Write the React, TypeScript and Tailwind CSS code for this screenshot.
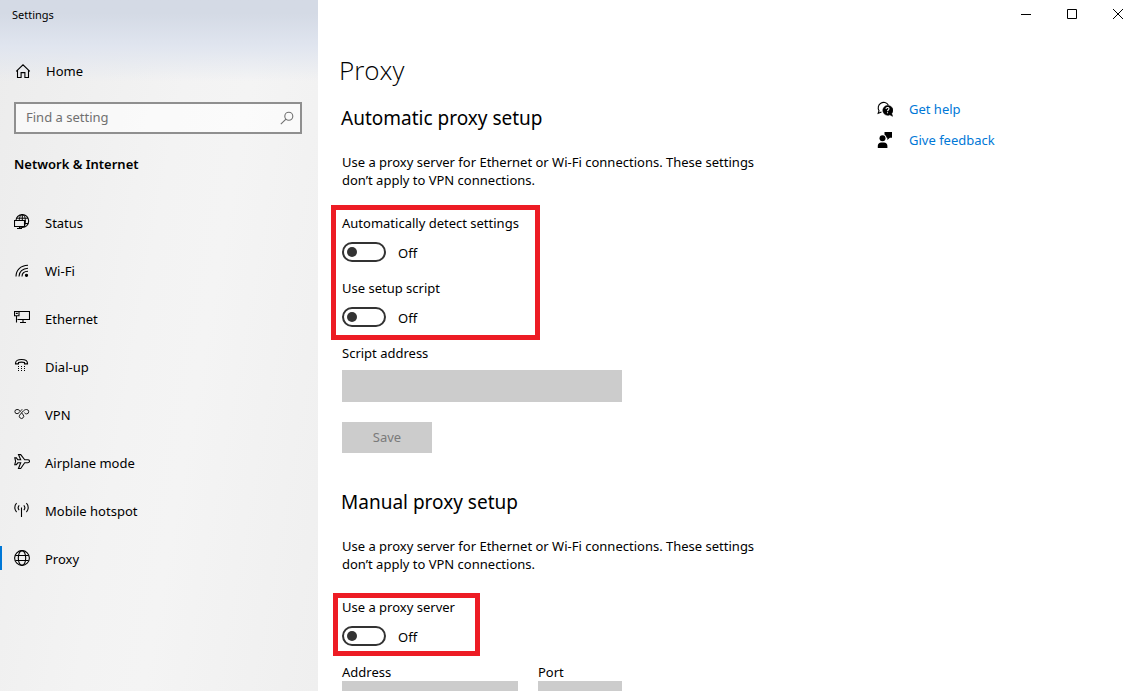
import { useState } from "react";
import type { ReactNode } from "react";

function Icon({ children }: { children: ReactNode }) {
  return (
    <svg viewBox="0 0 16 16" className="size-4 shrink-0" fill="none" stroke="currentColor" strokeWidth="1.1" aria-hidden="true">
      {children}
    </svg>
  );
}

const HomeIcon = () => (
  <Icon>
    <path d="M1.2 8.3 8 1.8l6.8 6.5M2.5 7.3v7.2h3.6V9.6h3.8v4.9h3.6V7.3" />
  </Icon>
);

const StatusIcon = () => (
  <Icon>
    <circle cx="8.3" cy="7" r="6.4" />
    <path d="M2.6 4.2h11.400M9 9.500h5.200M8.300.6v6M5.300 6.600c0-3.500 1.300-6 3-6s3.100 2.800 3.100 6.400c0 2-.3 4-1 5.300" strokeWidth="1" />
    <path d="M.5 6.500h10v6h-10z" fill="#ececec" />
    <path d="M5.500 12.500v2M3 14.500h5" />
  </Icon>
);

const WifiIcon = () => (
  <Icon>
    <path d="M2 14.500C2 8 6.500 3.500 14 3.200M5 14.500C5 9.800 8.600 6.400 14 6.200M8 14.500c0-3 2.400-5.200 6-5.300" />
    <circle cx="12.500" cy="13.300" r="1.100" fill="currentColor" />
  </Icon>
);

const EthernetIcon = () => (
  <Icon>
    <path d="M5 1.500h10.500v8H3.500M.5 1.500H5v4.200H.5zM2.500 5.700v6.800M1.800 3.400h2M9 9.500v3M6 12.500h6" />
  </Icon>
);

const DialupIcon = () => (
  <Icon>
    <path d="M1.500 5.200C1.500 2.600 4 1.500 7.500 1.500s6 1.100 6 3.700v.7h-3V4.500c-1.800-.5-4.200-.5-6 0v1.400h-3z" />
    <path d="M4 8.500h7M4 10.500h7M4 12.500h7" strokeWidth="1" strokeDasharray="1 2" />
  </Icon>
);

const VpnIcon = () => (
  <Icon>
    <g strokeWidth="0.9">
      <path d="M5.600 9.200 8.300 6C9.800 4.300 11 3.500 12.500 3.500a2.200 2.200 0 1 1 0 4.400c-.9 0-1.600-.5-2.100-1.200" />
      <path d="M6.200 5.200C5.600 4.200 4.600 3.500 3 3.500a2.100 2.100 0 1 0 0 4.200c1.800 0 2.600-1.800 3.400-2.700.6-.7 1.200-1.200 2-1.300" />
      <path d="M7.600 6.800 9.300 9a2.200 2.200 0 1 1-3.700.2" />
    </g>
  </Icon>
);

const AirplaneIcon = () => (
  <Icon>
    <path d="M6.700 5.800 4.500.6h2.200l4 5.200h3.100c1 0 1.700.7 1.700 1.500s-.7 1.500-1.700 1.500h-3.100l-4 5.700H4.500l2.200-5.700H3.800L2.400 10.700H.8l.8-3.400L.8 3.900h1.600l1.400 1.900z" />
  </Icon>
);

const HotspotIcon = () => (
  <Icon>
    <path d="M7.500 5.500v9.500M5.200 3.400a3.600 3.600 0 0 0 0 4.800M9.800 3.400a3.600 3.600 0 0 1 0 4.800M2.600 1.200a6.300 6.300 0 0 0 0 8.800M12.400 1.200a6.300 6.300 0 0 1 0 8.800" />
  </Icon>
);

const GlobeIcon = () => (
  <Icon>
    <circle cx="8" cy="8" r="7.400" />
    <ellipse cx="8" cy="8" rx="3.700" ry="7.400" />
    <path d="M1.400 5.500h13.200M1.400 10.500h13.200" />
  </Icon>
);

const SearchIcon = () => (
  <Icon>
    <circle cx="9.800" cy="6.200" r="4" />
    <path d="M7 9.200 1.800 14.200" />
  </Icon>
);

const HelpIcon = () => (
  <Icon>
    <path d="M4.500 10.900 1.200 12.200 2 9.700A5.100 5.100 0 1 1 11.300 4" />
    <path d="M10.500 4.500a4.900 4.900 0 1 0 2.400 9.300l2.600 1.500-.8-2.700a4.900 4.900 0 0 0-4.200-8.100z" fill="currentColor" strokeWidth="0.600" />
    <path d="M9 8c0-2 3-2 3-.2 0 1.200-1.500 1.200-1.500 2.500M10.500 11.200v1.100" stroke="#fff" />
  </Icon>
);

const FeedbackIcon = () => (
  <Icon>
    <g fill="currentColor" stroke="none">
      <circle cx="5.500" cy="6.300" r="3" />
      <path d="M.8 16v-2.200c0-2.100 1.500-3.400 3.400-3.400h2.800c2 0 3.400 1.300 3.400 3.400V16zM7.500 0H15v5.700h-2.100L10.300 8V5.700H9.600A4.400 4.400 0 0 0 7.500 2.400z" />
    </g>
  </Icon>
);

const navItems = [
  { label: "Status", icon: StatusIcon },
  { label: "Wi-Fi", icon: WifiIcon },
  { label: "Ethernet", icon: EthernetIcon },
  { label: "Dial-up", icon: DialupIcon },
  { label: "VPN", icon: VpnIcon },
  { label: "Airplane mode", icon: AirplaneIcon },
  { label: "Mobile hotspot", icon: HotspotIcon },
  { label: "Proxy", icon: GlobeIcon },
];

function Sidebar() {
  return (
    <aside className="flex w-[318px] shrink-0 flex-col bg-[linear-gradient(100deg,#ececec_0%,#f3f3f3_45%,#f4f4f4_60%,#efefef_100%)]">
      <div className="flex flex-col bg-linear-to-b from-[#d4dae5] from-15% via-[#e0e5ef] via-50% to-transparent to-90%">
        <div className="flex h-[30px] items-center pl-3 text-[11px]">Settings</div>
        <div className="mt-[21px] flex h-10 items-center">
          <a href="#home" className="flex items-center gap-[15px] pl-[15px]">
            <HomeIcon />
            <span className="pt-0.5">Home</span>
          </a>
        </div>
      </div>
      <div className="mt-[11px] pr-4 pl-3.5">
        <div className="flex h-8 items-center border-2 border-[#8f8f8f] bg-white/60 pr-[5px] pl-2.5 text-[#707070]">
          <input
            type="search"
            aria-label="Find a setting"
            placeholder="Find a setting"
            className="min-w-0 flex-1 bg-transparent outline-none placeholder:text-[#707070]"
          />
          <SearchIcon />
        </div>
      </div>
      <h2 className="mt-5 pl-3.5 leading-5 font-semibold">Network &amp; Internet</h2>
      <nav className="mt-6 flex flex-col">
        {navItems.map(({ label, icon: ItemIcon }) => (
          <a key={label} href={"#" + label} className="flex h-12 items-center">
            <span className={label === "Proxy" ? "h-6 w-0.5 bg-[#0078d7]" : "h-6 w-0.5"} />
            <span className="flex items-center gap-[15px] pl-3">
              <ItemIcon />
              <span className="pt-[3px]">{label}</span>
            </span>
          </a>
        ))}
      </nav>
    </aside>
  );
}

function Toggle({ label }: { label: string }) {
  const [on, setOn] = useState(false);
  return (
    <label className="flex flex-col gap-2.5">
      <span className="leading-[18px]">{label}</span>
      <span className="flex h-5 items-center gap-3">
        <input type="checkbox" role="switch" checked={on} onChange={() => setOn(!on)} className="peer sr-only" />
        <span className="flex h-5 w-11 items-center rounded-full border-2 border-[#333] px-[3px] peer-checked:justify-end">
          <span className="size-2.5 rounded-full bg-[#333]" />
        </span>
        <span className="pt-[3px]">{on ? "On" : "Off"}</span>
      </span>
    </label>
  );
}

function Intro({ title }: { title: string }) {
  return (
    <>
      <h2 className="-ml-px text-[19px] leading-7">{title}</h2>
      <p className="mt-[21px] max-w-[436px] leading-[18px]">
        Use a proxy server for Ethernet or Wi-Fi connections. These settings don’t apply to VPN connections.
      </p>
    </>
  );
}

function WindowButtons() {
  return (
    <div className="-mr-1 flex h-7 justify-end">
      <button aria-label="Minimize" className="flex w-[46px] items-center justify-center">
        <svg viewBox="0 0 10 10" className="size-2.5" stroke="currentColor"><path d="M0 5.500h10" /></svg>
      </button>
      <button aria-label="Maximize" className="flex w-[46px] items-center justify-center">
        <svg viewBox="0 0 10 10" className="size-2.5" fill="none" stroke="currentColor"><path d="M.5.5h9v9h-9z" /></svg>
      </button>
      <button aria-label="Close" className="flex w-[46px] items-center justify-center">
        <svg viewBox="0 0 10 10" className="size-2.5" stroke="currentColor"><path d="m0 0 10 10M10 0 0 10" /></svg>
      </button>
    </div>
  );
}

export default function App() {
  return (
    <div className="flex h-screen overflow-hidden bg-white font-['Noto_Sans','Open_Sans',sans-serif] text-[13px] text-black">
      <Sidebar />
      <div className="flex min-w-0 flex-1 flex-col">
        <WindowButtons />
        <div className="flex min-h-0 flex-1 overflow-y-auto [scrollbar-width:none]">
          <main className="flex min-w-0 flex-1 flex-col items-start pl-6">
            <h1 className="-ml-[3px] mt-6 font-['Open_Sans','Noto_Sans',sans-serif] text-[26px] leading-9 font-light">Proxy</h1>

            <section className="mt-4 flex flex-col items-start">
              <Intro title="Automatic proxy setup" />
              <div className="mt-4 -ml-[11px] flex w-[209px] flex-col gap-[17px] border-5 border-[#ed1c24] px-1.5 pt-1 pb-2">
                <Toggle label="Automatically detect settings" />
                <Toggle label="Use setup script" />
              </div>
              <label htmlFor="script" className="mt-1 leading-[18px]">Script address</label>
              <input id="script" disabled className="mt-2 h-8 w-[280px] bg-[#ccc] px-2" />
              <button disabled className="mt-5 h-[31px] w-[90px] bg-[#ccc] text-[#7a7a7a]">Save</button>
            </section>

            <section className="mt-[35px] flex flex-col items-start pb-10">
              <Intro title="Manual proxy setup" />
              <div className="mt-5 -ml-[9px] w-[147px] border-5 border-[#ed1c24] px-1 pb-[5px]">
                <Toggle label="Use a proxy server" />
              </div>
              <div className="mt-[7px] flex gap-5">
                <label className="flex w-44 flex-col leading-[18px]">
                  Address
                  <input disabled className="h-8 bg-[#ccc] px-2" />
                </label>
                <label className="flex w-[84px] flex-col leading-[18px]">
                  Port
                  <input disabled className="h-8 bg-[#ccc] px-2" />
                </label>
              </div>
            </section>
          </main>
          <aside className="flex w-[260px] shrink-0 flex-col gap-[11px] pt-[71px] leading-5 text-[#0078d7]">
            <a href="#help" className="flex items-center gap-4">
              <span className="text-black"><HelpIcon /></span>
              Get help
            </a>
            <a href="#feedback" className="flex items-center gap-4">
              <span className="text-black"><FeedbackIcon /></span>
              Give feedback
            </a>
          </aside>
        </div>
      </div>
    </div>
  );
}
